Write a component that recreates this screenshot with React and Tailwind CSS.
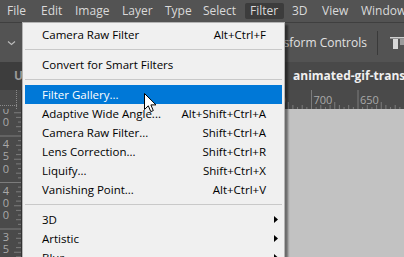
import React from 'react';

const menuBar = [
  { label: 'File', w: 'w-[34px]' },
  { label: 'Edit', w: 'w-[34px]' },
  { label: 'Image', w: 'w-[47px]' },
  { label: 'Layer', w: 'w-[43px]' },
  { label: 'Type', w: 'w-[38px]' },
  { label: 'Select', w: 'w-[47px]' },
  { label: 'Filter', w: 'w-[39px] mr-[3px]', open: true },
  { label: '3D', w: 'w-[30px]' },
  { label: 'View', w: 'w-[39px]' },
  { label: 'Window', w: 'w-[60px]' },
];

const filterItems = [
  { label: 'Camera Raw Filter', keys: 'Alt+Ctrl+F' },
  'sep',
  { label: 'Convert for Smart Filters' },
  'sep',
  { label: 'Filter Gallery...', active: true },
  { label: 'Adaptive Wide Angle...', keys: 'Alt+Shift+Ctrl+A' },
  { label: 'Camera Raw Filter...', keys: 'Shift+Ctrl+A' },
  { label: 'Lens Correction...', keys: 'Shift+Ctrl+R' },
  { label: 'Liquify...', keys: 'Shift+Ctrl+X' },
  { label: 'Vanishing Point...', keys: 'Alt+Ctrl+V' },
  'sep',
  { label: '3D', sub: true },
  { label: 'Artistic', sub: true },
  { label: 'Blur', sub: true },
  { label: 'Blur Gallery', sub: true },
];

function MenuBar() {
  return (
    <div className="flex h-[22px] items-center pl-[2px] text-[12px] text-[#dadada]">
      {menuBar.map((m) => (
        <span
          key={m.label}
          className={`${m.w} flex h-[16px] shrink-0 items-center whitespace-nowrap rounded-[2px] pl-[5px] ${m.open ? 'bg-[#3c3c3c]' : ''}`}
        >
          {m.label}
        </span>
      ))}
    </div>
  );
}

function OptionsBar() {
  return (
    <div className="flex h-[40px] items-center overflow-hidden border-t border-[#3f3f3f] text-[12px] text-[#e2e2e2]">
      <div className="flex w-[22px] shrink-0 justify-center">
        <svg width="9" height="6" viewBox="0 0 9 6">
          <path d="M1 1.5 L4.5 4.5 L8 1.5" fill="none" stroke="#bdbdbd" strokeWidth="1.1" />
        </svg>
      </div>
      <div className="flex-1" />
      <span className="whitespace-nowrap">Transform Controls</span>
      <div className="ml-[10px] h-[24px] w-px shrink-0 bg-[#3a3a3a]" />
      <svg className="-mr-[4px] ml-[12px] shrink-0" width="18" height="14" viewBox="0 0 18 14">
        <rect x="0" y="1" width="18" height="1.5" fill="#cfcfcf" />
        <rect x="3" y="3" width="5" height="10" fill="#d8d8d8" />
        <rect x="10" y="3" width="4" height="6" fill="#9c9c9c" />
      </svg>
    </div>
  );
}

function TabBar() {
  return (
    <div className="flex h-[28px] bg-[#3d3d3d] text-[12px] font-bold">
      <div className="flex w-[283px] shrink-0 items-center pl-[14px] text-[#9a9a9a]">
        <span className="whitespace-nowrap">U</span>
      </div>
      <div className="flex flex-1 items-center overflow-hidden bg-[#494949] pl-[10px] text-[#f0f0f0]">
        <span className="whitespace-nowrap">animated-gif-transparent.gif @ 100%</span>
      </div>
    </div>
  );
}

function HRuler() {
  const majors = [];
  const minors = [];
  for (let k = -6; k <= 2; k++) {
    const x = 289.5 + 46.5 * k;
    majors.push({ x, v: 700 - 50 * k });
    for (let j = 1; j < 10; j++) minors.push({ x: x + 4.65 * j, long: j === 5, odd: j % 2 === 1 });
  }
  return (
    <svg width="382" height="19" className="block">
      {minors.map((m, i) => (
        <line key={i} x1={m.x} x2={m.x} y1={m.long ? 12 : m.odd ? 17 : 15} y2="19" stroke="#7c7c7c" />
      ))}
      {majors.map((m) => (
        <g key={m.v}>
          <line x1={m.x} x2={m.x} y1="0" y2="19" stroke="#7c7c7c" />
          <text x={m.x + 2} y="14" fontSize="11" fill="#a9a9a9">
            {m.v}
          </text>
        </g>
      ))}
    </svg>
  );
}

function VRuler() {
  const majors = [];
  const minors = [];
  for (let k = -1; k <= 3; k++) {
    const y = 27 + 46.5 * k;
    majors.push({ y, v: String(450 - 50 * k) });
    for (let j = 1; j < 10; j++) minors.push({ y: y + 4.65 * j, long: j === 5, odd: j % 2 === 1 });
  }
  return (
    <svg width="21" height="148" className="block">
      {minors.map((m, i) => (
        <line key={i} y1={m.y} y2={m.y} x1={m.long ? 14 : m.odd ? 18 : 16} x2="21" stroke="#7c7c7c" />
      ))}
      {majors.map((m) => (
        <g key={m.v}>
          <line y1={m.y} y2={m.y} x1="0" x2="21" stroke="#7c7c7c" />
          {m.v.split('').map((d, i) => (
            <text key={i} x="6" y={m.y + 12 + 12.3 * i} fontSize="11" textAnchor="middle" fill="#a9a9a9">
              {d}
            </text>
          ))}
        </g>
      ))}
    </svg>
  );
}

function Workspace() {
  return (
    <div className="flex flex-1 flex-col">
      <div className="flex h-[19px] bg-[#4a4a4a]">
        <div className="relative w-[22px] shrink-0 border-r border-[#333]">
          <div className="absolute bottom-[3px] left-0 right-[4px] border-b border-dotted border-[#8a8a8a]" />
          <div className="absolute bottom-0 right-[4px] top-0 border-r border-dotted border-[#8a8a8a]" />
        </div>
        <HRuler />
      </div>
      <div className="flex flex-1">
        <div className="w-[22px] shrink-0 border-r border-[#333] bg-[#4a4a4a]">
          <VRuler />
        </div>
        <div className="flex-1 bg-[#c2c2c2]" />
      </div>
    </div>
  );
}

function FilterMenu() {
  return (
    <div className="absolute left-[22px] top-[22px] w-[263px] border border-[#b4b4b4] bg-[#f0f0f0] px-[2px] pt-[2px] text-[11.5px] text-black shadow-[3px_3px_2px_rgba(0,0,0,0.45)]">
      {filterItems.map((it, i) =>
        it === 'sep' ? (
          <div key={i} className="flex h-[11px] items-center">
            <div className="h-px w-full bg-[#c9c9c9]" />
          </div>
        ) : (
          <div
            key={i}
            className={`flex h-[19px] items-center pl-[17px] ${it.active ? 'bg-[#0078d7] text-white' : ''}`}
          >
            <span className="flex-1 whitespace-nowrap">{it.label}</span>
            {it.keys && <span className="whitespace-nowrap">{it.keys}</span>}
            <span className="flex w-[16px] shrink-0 pl-[8px]">
              {it.sub && (
                <svg width="4" height="7" viewBox="0 0 4 7">
                  <path d="M0 0 L4 3.5 L0 7 Z" fill="#000" />
                </svg>
              )}
            </span>
          </div>
        )
      )}
    </div>
  );
}

function Cursor() {
  return (
    <svg className="absolute left-[144px] top-[93px]" width="13" height="20" viewBox="0 0 13 20">
      <path
        d="M0.5 0.5 L0.5 16.5 L4.3 12.8 L6.8 18.6 L9.3 17.6 L6.9 11.9 L12 11.9 Z"
        fill="#fff"
        stroke="#000"
        strokeWidth="1"
        strokeLinejoin="miter"
      />
    </svg>
  );
}

export default function App() {
  return (
    <div className="relative flex h-[257px] w-[404px] flex-col overflow-hidden bg-[#535353] font-['Open_Sans',sans-serif]">
      <MenuBar />
      <OptionsBar />
      <TabBar />
      <Workspace />
      <FilterMenu />
      <Cursor />
    </div>
  );
}
